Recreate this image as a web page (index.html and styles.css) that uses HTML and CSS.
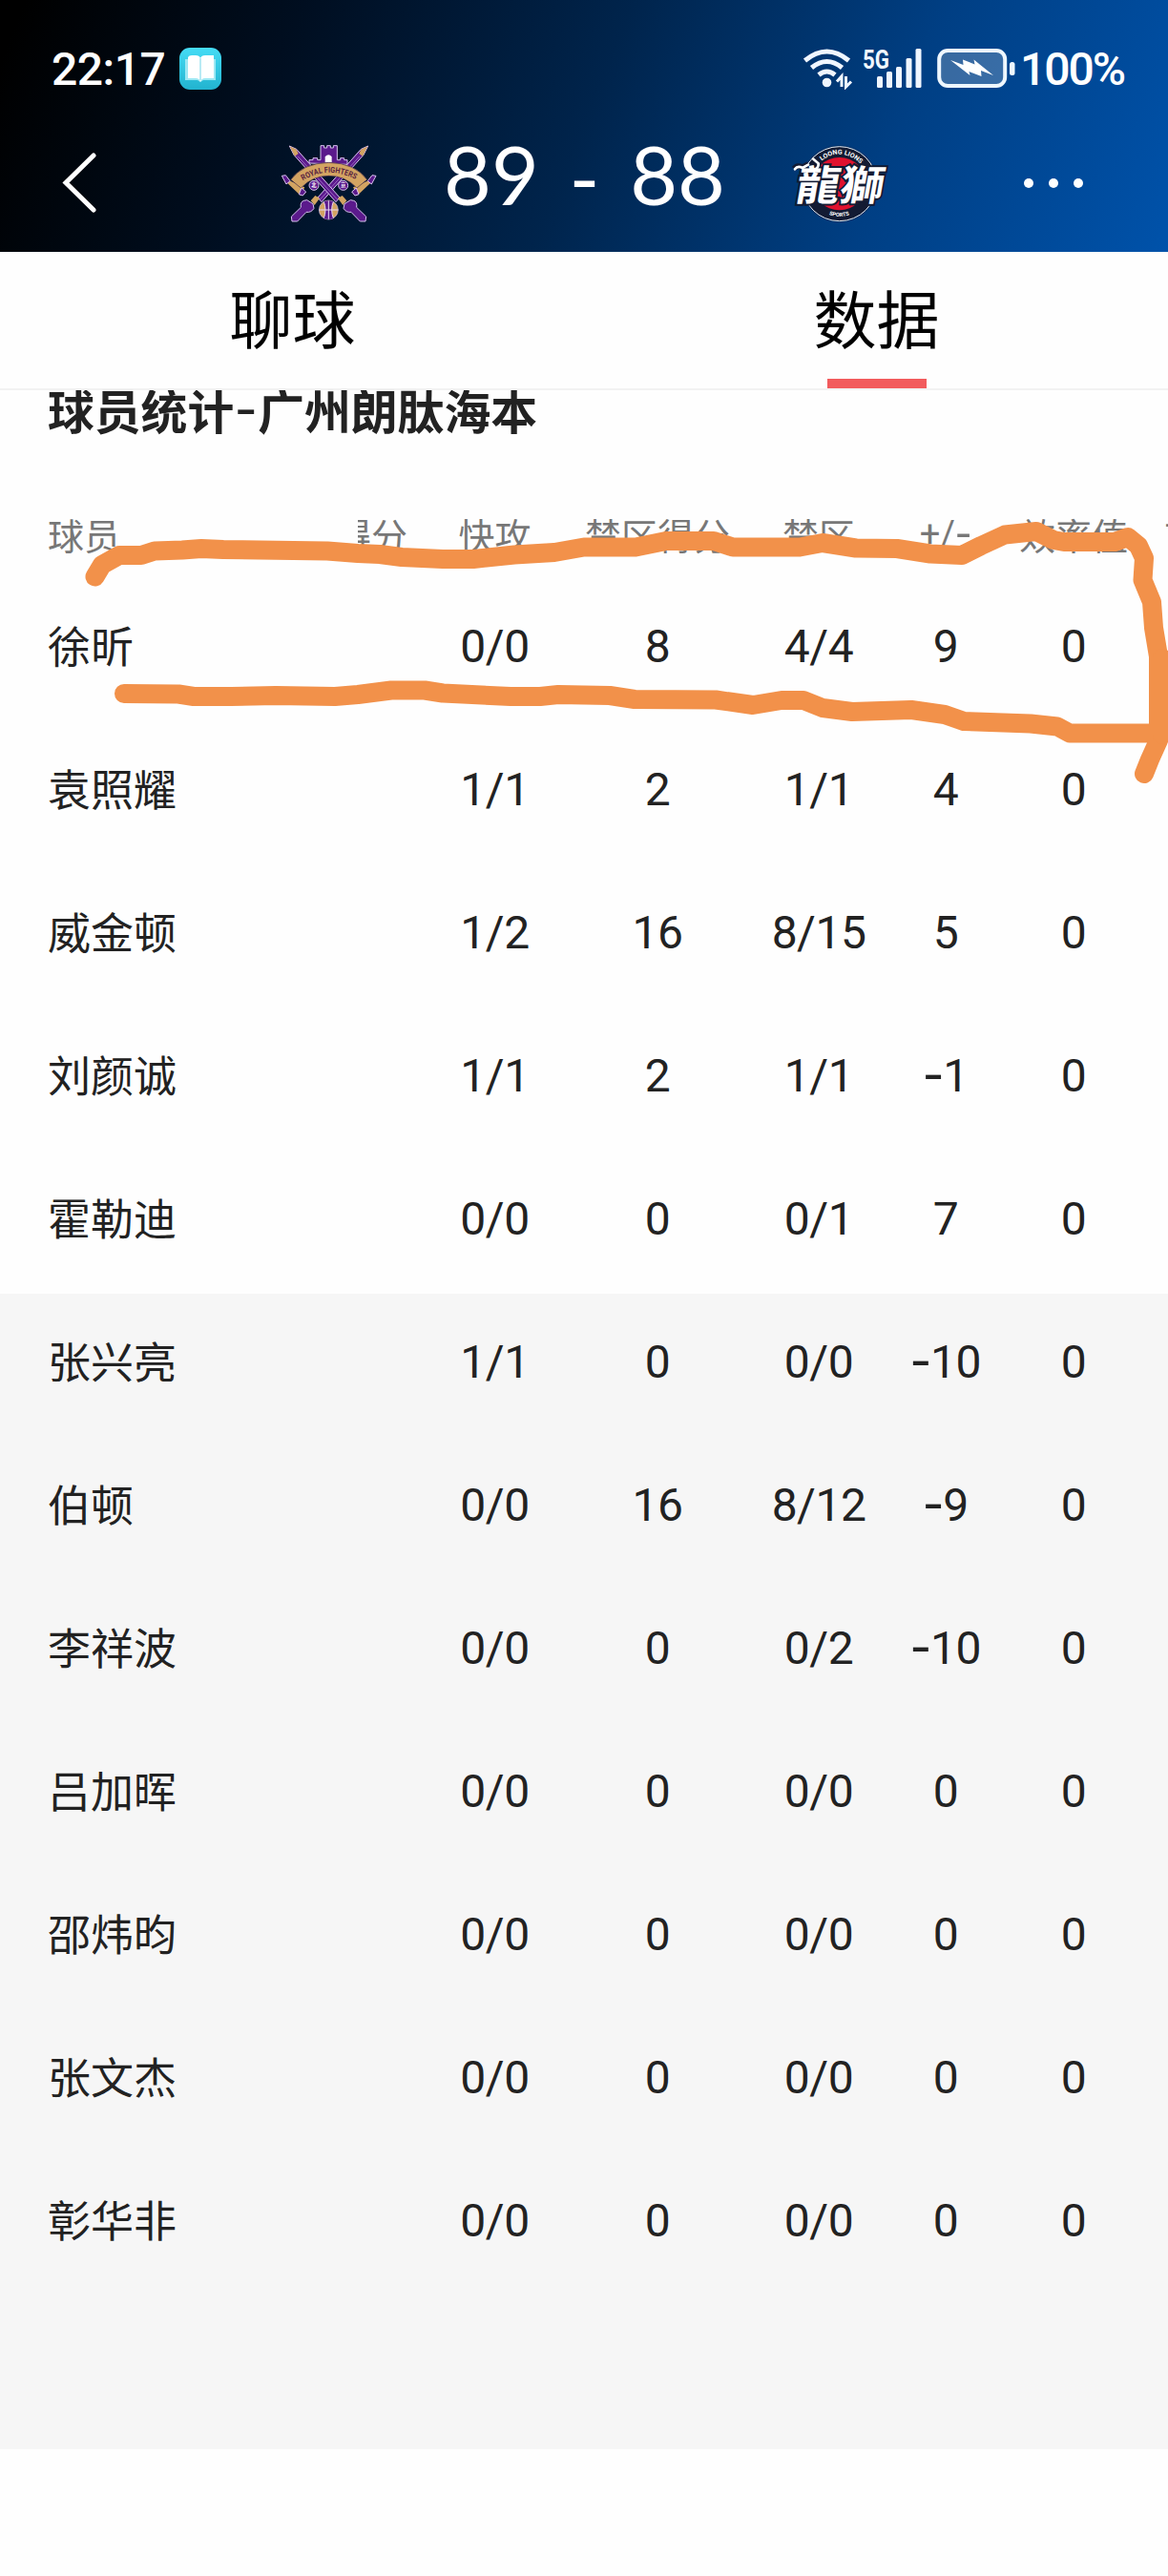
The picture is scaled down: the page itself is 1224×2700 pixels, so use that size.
FILE: index.html
```html
<!DOCTYPE html>
<html lang="zh-CN">

<head>
    <meta charset="UTF-8">
    <meta name="viewport" content="width=device-width, initial-scale=1.0">
    <title>球员统计</title>
    <link rel="stylesheet" href="styles.css">
</head>

<body>
    <div class="header">
        <div class="status">
            <div class="status-left">
                <span class="time">22:17</span>
                <svg class="book" width="44" height="44" viewBox="0 0 44 44">
                    <defs>
                        <linearGradient id="bookBg" x1="0" y1="0" x2="0" y2="1">
                            <stop offset="0" stop-color="#45dcf5" />
                            <stop offset="1" stop-color="#22b3cf" />
                        </linearGradient>
                    </defs>
                    <rect width="44" height="44" rx="11" fill="url(#bookBg)" />
                    <path d="M6 12H38V34H25L22 36L19 34H6Z" fill="#9ce8f4" />
                    <path d="M9 10Q10 8 13 8H17Q21 8 22 11Q23 8 27 8H36V32H27Q23 32 22 36Q21 32 17 32H9Z" fill="#fff" />
                    <path d="M22 11V34" stroke="#b9eaf4" stroke-width="2" />
                </svg>
            </div>
            <svg class="signals" width="224" height="44" viewBox="0 0 224 44">
                <!-- wifi -->
                <g fill="none" stroke="#f0f6ff" stroke-width="5">
                    <path d="M2.5 13.500Q25.500 -5.500 48.500 13.500" />
                    <path d="M9.500 21Q25.500 8 41.500 21" />
                    <path d="M17 28.500Q25.500 21.500 34 28.500" />
                </g>
                <circle cx="25.500" cy="36.500" r="4.800" fill="#f0f6ff" />
                <path d="M36 35.500L41 30V41M45.500 30V41L51 35.500" fill="none" stroke="#f0f6ff" stroke-width="3" />
                <!-- signal -->
                <text class="net" x="63" y="22" textLength="28" lengthAdjust="spacingAndGlyphs">5G</text>
                <g fill="#f0f6ff">
                    <rect x="78" y="30" width="6" height="12" rx="1.500" />
                    <rect x="88" y="25" width="6" height="17" rx="1.500" />
                    <rect x="98" y="20" width="6" height="22" rx="1.500" />
                    <rect x="108.500" y="11" width="6" height="31" rx="1.500" />
                    <rect x="118.500" y="1" width="6" height="41" rx="1.500" />
                </g>
                <!-- battery -->
                <rect x="143.200" y="3" width="69" height="37" rx="9" fill="#fff" fill-opacity=".22" stroke="#eef7ff" stroke-width="4" />
                <rect x="217" y="15" width="5.500" height="14" rx="2.500" fill="#eef7ff" />
                <path d="M155 13L168.500 18L168 12.500L180.500 17.500L179.500 12.500L200 29L187 24L187.500 30L174.500 25L175.500 29Z" fill="#fff" />
            </svg>
            <span class="percent">100%</span>
        </div>
        <div class="match">
            <svg class="back" width="40" height="64" viewBox="0 0 40 64">
                <path d="M34 4L5 32.500L34 61" fill="none" stroke="#fff" stroke-width="5" stroke-linecap="round" />
            </svg>
            <svg class="logo" width="130" height="110" viewBox="0 0 390 330">
                <defs>
                    <path id="ribbon" d="M112 163Q195 112 284 163" />
                    <g id="sword">
                        <path d="M70 54L92 64L228 216L216 230L84 82Z" fill="#5b1a8c" stroke="#d9c4ef" stroke-width="3" />
                        <path d="M71 55L92 65L98 78L87 86Z" fill="#d3a462" />
                        <path d="M96 86L222 224" stroke="#b58bd8" stroke-width="2" />
                        <path d="M222 218L236 210L250 226L238 240Z" fill="#d3a462" />
                        <path d="M243 236L262 224L272 226Q284 230 281 247L311 276L309 291H292L264 262Q248 264 240 250Z" fill="#5b1a8c" stroke="#d9c4ef" stroke-width="3" />
                    </g>
                </defs>
                <path d="M132 108V98H144V92H158V98H168V53H179V60H188V53H199V60H208V53H220V98H230V92H242V98H252V112Z" fill="#5b1a8c" stroke="#d9c4ef" stroke-width="3" />
                <path d="M182 106V88Q193 76 203 88V106Z" fill="#fff" />
                <use href="#sword" transform="matrix(-1 0 0 1 387 0)" />
                <use href="#sword" />
                <path d="M54 150L68 162L118 184L104 209L52 160Z" fill="#d3a462" />
                <path d="M334 150L320 162L270 184L284 209L336 160Z" fill="#d3a462" />
                <path d="M74 160Q112 108 194 106Q276 108 314 160L282 186Q246 148 194 148Q142 148 106 186Z" fill="#d3a462" stroke="#3d2548" stroke-width="2" />
                <g fill="#5b1a8c" stroke="#d9c4ef" stroke-width="3">
                    <path d="M46 148L58 146L72 164L60 174Z" />
                    <path d="M108 186L122 198L112 210L100 206Z" />
                    <path d="M342 148L330 146L316 164L328 174Z" />
                    <path d="M280 186L266 198L276 210L288 206Z" />
                    <circle cx="147" cy="178" r="15" />
                    <circle cx="239" cy="178" r="15" />
                </g>
                <text class="seal" x="147" y="184">北</text>
                <text class="seal" x="239" y="184">京</text>
                <text class="royal"><textPath href="#ribbon" textLength="174" lengthAdjust="spacingAndGlyphs">ROYAL FIGHTERS</textPath></text>
                <circle cx="193" cy="255" r="30" fill="#d3a462" stroke="#d9c4ef" stroke-width="2" />
                <path d="M178 229Q193 222 208 229Q198 255 208 281Q193 288 178 281Q188 255 178 229Z" fill="#5b1a8c" />
                <path d="M193 226V284M163 255H223M178 229Q188 255 178 281M208 229Q198 255 208 281" fill="none" stroke="#e8d8f4" stroke-width="3" />
            </svg>
            <div class="score">
                <span>89</span>
                <span class="dash">-</span>
                <span>88</span>
            </div>
            <svg class="logo lions" width="130" height="110" viewBox="0 0 390 330">
                <defs>
                    <path id="arcTop" d="M138 86Q200 38 264 98" />
                    <path id="arcBottom" d="M150 250Q195 272 240 250" />
                </defs>
                <circle cx="194" cy="158" r="121" fill="#02152f" opacity=".35" />
                <circle cx="194" cy="158" r="117" fill="#131b33" stroke="#e6eaf2" stroke-width="3" />
                <circle cx="194" cy="158" r="83" fill="#e0122e" />
                <text class="ring small"><textPath href="#arcBottom" startOffset="12" textLength="66" lengthAdjust="spacingAndGlyphs">SPORTS</textPath></text>
                <path d="M52 110Q60 98 78 106L96 96M100 120Q128 116 128 96L114 80" fill="none" stroke="#131b33" stroke-width="18" />
                <text class="loong" transform="translate(52 210) skewX(-10) scale(1.06 1)">龍獅</text>
                <path d="M54 112Q62 100 78 108L96 98M100 116Q130 114 128 94L112 80" fill="none" stroke="#fff" stroke-width="8" stroke-linecap="round" />
                <text class="ring"><textPath href="#arcTop" textLength="136" lengthAdjust="spacingAndGlyphs">LOONG LIONS</textPath></text>
            </svg>
            <div class="more"><i></i><i></i><i></i></div>
        </div>
    </div>

    <div class="tabs">
        <div class="tab">聊球</div>
        <div class="tab active">数据</div>
    </div>

    <div class="stats">
        <h1 class="title">球员统计<span class="hyphen">-</span>广州朗肽海本</h1>
        <div class="row head">
            <div class="name">球员</div>
            <div class="cut">得分</div>
            <div>快攻</div>
            <div>禁区得分</div>
            <div>禁区</div>
            <div><span>+/<span class="minus">-</span></span></div>
            <div>效率值</div>
            <div class="next">首发</div>
        </div>

        <div class="starters">
            <div class="row">
                <div class="name">徐昕</div><div></div>
                <div>0/0</div><div>8</div><div>4/4</div><div>9</div><div>0</div>
            </div>
            <div class="row">
                <div class="name">袁照耀</div><div></div>
                <div>1/1</div><div>2</div><div>1/1</div><div>4</div><div>0</div>
            </div>
            <div class="row">
                <div class="name">威金顿</div><div></div>
                <div>1/2</div><div>16</div><div>8/15</div><div>5</div><div>0</div>
            </div>
            <div class="row">
                <div class="name">刘颜诚</div><div></div>
                <div>1/1</div><div>2</div><div>1/1</div><div><span class="minus">-</span>1</div><div>0</div>
            </div>
            <div class="row">
                <div class="name">霍勒迪</div><div></div>
                <div>0/0</div><div>0</div><div>0/1</div><div>7</div><div>0</div>
            </div>
        </div>

        <div class="bench">
            <div class="row">
                <div class="name">张兴亮</div><div></div>
                <div>1/1</div><div>0</div><div>0/0</div><div><span class="minus">-</span>10</div><div>0</div>
            </div>
            <div class="row">
                <div class="name">伯顿</div><div></div>
                <div>0/0</div><div>16</div><div>8/12</div><div><span class="minus">-</span>9</div><div>0</div>
            </div>
            <div class="row">
                <div class="name">李祥波</div><div></div>
                <div>0/0</div><div>0</div><div>0/2</div><div><span class="minus">-</span>10</div><div>0</div>
            </div>
            <div class="row">
                <div class="name">吕加晖</div><div></div>
                <div>0/0</div><div>0</div><div>0/0</div><div>0</div><div>0</div>
            </div>
            <div class="row">
                <div class="name">邵炜昀</div><div></div>
                <div>0/0</div><div>0</div><div>0/0</div><div>0</div><div>0</div>
            </div>
            <div class="row">
                <div class="name">张文杰</div><div></div>
                <div>0/0</div><div>0</div><div>0/0</div><div>0</div><div>0</div>
            </div>
            <div class="row">
                <div class="name">彰华非</div><div></div>
                <div>0/0</div><div>0</div><div>0/0</div><div>0</div><div>0</div>
            </div>
        </div>
    </div>

    <!-- hand drawn marker around the first player -->
    <svg class="marker" width="1224" height="300" viewBox="0 540 1224 300">
        <path d="M99.500 604.500L107 592L125 582L148 582L162 577.500L191 576.500L211 575L234 576L343 577.500L375 580L398 581L421 584L464 586L496 586L539 581.500L581 579L612 573.500L666 573.500L698 567L748 567L768 573.500L838 573.500L862 569L897 574.500L940 575L975 580.500L1008 582L1028 572L1053 560.500L1086 557L1104 566L1115 568L1168 568L1182 563L1193 572L1199 585L1197.500 608L1207 631L1209 658L1214 688L1214 776L1205 796L1199 811" />
        <path d="M130 727L187 727.500L203 730L242 730L289 729L351 730L375 728L410 723.500L445 723.500L464 726.500L535 730L566 730L585 728L639 729L665 733L750 733.500L789 739L819 734L842 734L862 742L893 746L924 745L955 744L990 749L1010 756L1080 758.500L1108 761.500L1121 768.500L1213 768.500" />
        <path d="M1218 690V770" />
    </svg>
</body>

</html>
```
FILE: styles.css
```css
* {
    box-sizing: border-box;
}
body {
    margin: 0;
    width: 1224px;
    height: 2700px;
    position: relative;
    overflow: hidden;
    background-color: #fefefe;
    color: #222222;
    font-family: Roboto, "Noto Sans CJK SC", sans-serif;
}
.header {
    height: 264px;
    color: #ffffff;
    background: linear-gradient(112deg, #000000 2%, #000e20 24%, #00244c 50%, #003f84 75%, #0052aa 100%);
}
.status {
    display: flex;
    align-items: center;
    height: 114px;
    padding: 30px 47px 0 54px;
    font-size: 48px;
    font-weight: 500;
}
.status-left {
    display: flex;
    align-items: center;
    flex: 1;
}
.time {
    width: 134px;
    letter-spacing: -0.5px;
}
.time,
.percent {
    line-height: 56px;
    padding-top: 2px;
}
.signals {
    margin-right: 4px;
}
.net {
    font-size: 28px;
    font-weight: 700;
    fill: #f0f6ff;
}
.percent {
    width: 108px;
    letter-spacing: -2px;
}
.match {
    display: flex;
    align-items: center;
    height: 150px;
    padding-left: 64px;
}
.back {
    margin-right: 176px;
    margin-top: 4px;
}
.logo {
    margin-top: 2px;
}
.logo.lions {
    margin-top: 12px;
}
.score {
    display: flex;
    align-items: center;
    justify-content: space-between;
    width: 295px;
    margin: 0 55px 0 55px;
    font-family: Lato, sans-serif;
    font-size: 86px;
    line-height: 100px;
    height: 114px;
    padding-bottom: 14px;
}
.dash {
    margin-top: 6px;
}
.more {
    display: flex;
    gap: 16px;
    margin-left: 128px;
    margin-top: 6px;
}
.more i {
    width: 10px;
    height: 10px;
    border-radius: 50%;
    background-color: #ffffff;
}
.royal {
    font-family: Roboto, sans-serif;
    font-size: 25px;
    font-weight: 700;
    fill: #5a2340;
}
.seal {
    font-family: "Noto Sans CJK SC", sans-serif;
    font-size: 16px;
    font-weight: 700;
    text-anchor: middle;
    fill: #ffffff;
}
.ring {
    font-family: Roboto, sans-serif;
    font-size: 20px;
    font-weight: 700;
    fill: #ffffff;
}
.ring.small {
    font-size: 17px;
}
.loong {
    font-family: "Noto Sans CJK TC", sans-serif;
    font-size: 130px;
    font-weight: 700;
    fill: #ffffff;
    stroke: #131b33;
    stroke-width: 12px;
    paint-order: stroke;
}
.tabs {
    display: flex;
    height: 145px;
    border-bottom: 2px solid #f2f2f2;
}
.tab {
    flex: 1;
    display: flex;
    flex-direction: column;
    align-items: center;
    justify-content: space-between;
    color: #000000;
    font-size: 66px;
    line-height: 96px;
    padding: 26px 0 0 1px;
}
.tab.active::after {
    content: "";
    width: 104px;
    height: 10px;
    background-color: #f25b5d;
}
.stats {
    height: 2158px;
    overflow: hidden;
}
.title {
    margin: -9px 0 0 50px;
    height: 101px;
    font-size: 48.8px;
    line-height: 68px;
    font-weight: 700;
}
.hyphen {
    display: inline-block;
    width: 25px;
    text-align: center;
    font-family: "Noto Sans CJK SC", sans-serif;
    font-size: 66px;
    font-weight: 400;
    line-height: 0;
}
.row {
    display: grid;
    grid-template-columns: 375px 58px 171px 170px 168px 98px 170px 14px;
    align-items: center;
    justify-items: center;
    height: 150px;
    padding-bottom: 7px;
    font-size: 48px;
    letter-spacing: -0.5px;
    white-space: nowrap;
}
.row .name {
    justify-self: start;
    padding: 0 0 4px 50px;
    font-size: 45px;
    letter-spacing: 0;
}
.head {
    height: 105px;
    padding: 12px 0 0;
    color: #777777;
    font-size: 38px;
    letter-spacing: 0;
}
.head .name {
    font-size: 38px;
    padding: 0 0 0 50px;
}
.cut {
    width: 58px;
    padding-right: 6px;
    display: flex;
    justify-content: flex-end;
    overflow: hidden;
}
.next {
    justify-self: start;
    padding-left: 10px;
}
.minus {
    font-family: "Noto Sans CJK SC", sans-serif;
    font-size: 1.3em;
    line-height: 0;
    vertical-align: -0.04em;
}
.bench {
    height: 1211px;
    background-color: #f6f6f6;
}
.marker {
    position: absolute;
    left: 0;
    top: 540px;
    fill: none;
    stroke: #f2914a;
    stroke-width: 20px;
    stroke-linecap: round;
    stroke-linejoin: round;
}
```
